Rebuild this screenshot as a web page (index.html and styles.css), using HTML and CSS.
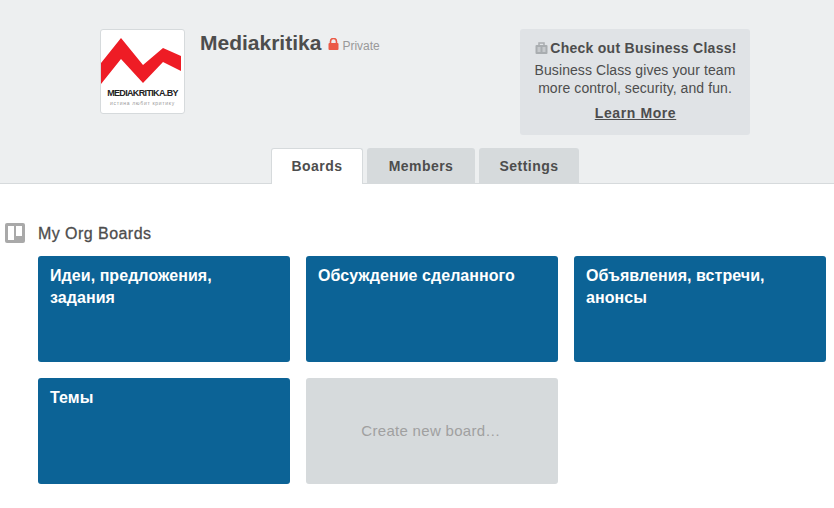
FILE: index.html
```html
<!DOCTYPE html>
<html lang="en">
<head>
<meta charset="utf-8">
<title>Mediakritika</title>
<link rel="stylesheet" href="styles.css">
</head>
<body>
<header class="org-header">
  <div class="org-top">
    <div class="org-logo">
      <svg class="logo-mark" width="83" height="56" viewBox="0 0 83 56">
        <polygon points="0,33 20,8 42,35 62,18 80,26 80,41 62,32 42,53 20,29 0,54" fill="#ee1c25"/>
      </svg>
      <div class="logo-name">MEDIAKRITIKA.BY</div>
      <div class="logo-tag">истина любит критику</div>
    </div>
    <div class="org-title">
      <h1 class="org-name">Mediakritika</h1>
      <svg class="lock" width="11" height="12" viewBox="0 0 11 12"><path d="M2.5 5V3.5a3 3 0 0 1 6 0V5" fill="none" stroke="#eb5a46" stroke-width="1.6"/><rect x="0.5" y="5" width="10" height="7" rx="1" fill="#eb5a46"/></svg>
      <span class="org-private">Private</span>
    </div>
    <aside class="promo">
      <div class="promo-head">
        <svg class="promo-icon" width="13" height="12" viewBox="0 0 13 12"><path d="M4 3V1h5V3" fill="none" stroke="#a9adb0" stroke-width="1.5"/><rect x="0.5" y="3" width="12" height="9" rx="1" fill="#a9adb0"/><rect x="2.5" y="5" width="3" height="5" fill="#c6c9cc"/><rect x="7.500" y="5" width="3" height="5" fill="#c6c9cc"/></svg>
        <span>Check out Business Class!</span>
      </div>
      <p class="promo-text">Business Class gives your team more control, security, and fun.</p>
      <a class="promo-link" href="#">Learn More</a>
    </aside>
  </div>
  <nav class="tabs">
    <a class="tab tab-active" href="#">Boards</a>
    <a class="tab tab-members" href="#">Members</a>
    <a class="tab tab-settings" href="#">Settings</a>
  </nav>
</header>
<main class="content">
  <div class="section-head">
    <svg class="section-icon" width="20" height="20" viewBox="0 0 20 20"><rect width="20" height="20" rx="2" fill="#a9a9a9"/><rect x="3" y="3" width="6" height="14" fill="#fff"/><rect x="11" y="3" width="6" height="10" fill="#fff"/></svg>
    <h2 class="section-title">My Org Boards</h2>
  </div>
  <div class="boards">
    <a class="board" href="#">Идеи, предложения, задания</a>
    <a class="board" href="#">Обсуждение сделанного</a>
    <a class="board" href="#">Объявления, встречи, анонсы</a>
    <a class="board" href="#">Темы</a>
    <a class="board board-new" href="#">Create new board…</a>
  </div>
</main>
</body>
</html>
```
FILE: styles.css
```css
* { box-sizing: border-box; }
html, body { margin: 0; padding: 0; }
body {
  background: #fff;
  color: #4d4d4d;
  font-family: "Liberation Sans", Arial, sans-serif;
  font-size: 14px;
  overflow: hidden;
}
.org-header {
  height: 184px;
  background: #edeff0;
  border-bottom: 1px solid #d6dadc;
}
.org-top {
  display: flex;
  height: 148px;
  padding: 29px 0 0 100px;
}
.org-logo {
  width: 85px;
  height: 85px;
  background: #fff;
  border: 1px solid #d6dadc;
  border-radius: 3px;
  display: flex;
  flex-direction: column;
  align-items: center;
  overflow: hidden;
}
.logo-mark { display: block; flex: none; }
.logo-name {
  margin-top: 2px;
  color: #222;
  font-size: 9px;
  font-weight: 700;
  letter-spacing: -0.65px;
  line-height: 11px;
  white-space: nowrap;
}
.logo-tag {
  margin-top: 1px;
  color: #999;
  font-size: 5px;
  letter-spacing: 0.7px;
  line-height: 6px;
  white-space: nowrap;
}
.org-title {
  width: 320px;
  margin-left: 15px;
  display: flex;
  align-items: baseline;
  height: 28px;
}
.org-name {
  margin: 0;
  font-size: 21px;
  line-height: 28px;
  font-weight: 700;
  color: #4d4d4d;
}
.lock { margin-left: 7px; align-self: center; margin-top: 2px; }
.org-private { margin-left: 3px; font-size: 12px; color: #999; }
.promo {
  width: 230px;
  height: 106px;
  padding: 11px 10px 0;
  background: #e0e3e6;
  border-radius: 3px;
  text-align: center;
}
.promo-head {
  display: flex;
  justify-content: center;
  align-items: center;
  gap: 2px;
  margin: 0 -6px;
  padding-left: 2px;
  font-size: 14px;
  line-height: 16px;
  font-weight: 700;
  letter-spacing: 0.27px;
  white-space: nowrap;
}
.promo-text {
  margin: 5px 0 0;
  font-size: 14px;
  line-height: 18px;
  letter-spacing: 0.08px;
}
.promo-link {
  display: block;
  margin-top: 7px;
  padding-left: 1px;
  font-size: 14px;
  line-height: 18px;
  font-weight: 700;
  letter-spacing: 0.6px;
  color: #4d4d4d;
}
.tabs {
  display: flex;
  gap: 4px;
  height: 36px;
  padding-left: 271px;
}
.tab {
  display: block;
  width: 100px;
  height: 35px;
  background: #d6dadc;
  border-radius: 3px 3px 0 0;
  color: #4d4d4d;
  font-size: 14px;
  line-height: 36px;
  font-weight: 700;
  letter-spacing: 0.45px;
  text-align: center;
  text-decoration: none;
}
.tab-active {
  width: 92px;
  height: 36px;
  background: #fff;
  border: 1px solid #d6dadc;
  border-bottom: 0;
  line-height: 35px;
}
.tab-members { width: 108px; }
.content { padding: 39px 0 0 5px; }
.section-head {
  display: flex;
  align-items: center;
  height: 20px;
}
.section-title {
  margin: 2px 0 0 13px;
  font-size: 16px;
  line-height: 20px;
  font-weight: 400;
  letter-spacing: 0.45px;
  -webkit-text-stroke: 0.3px #4d4d4d;
  color: #4d4d4d;
}
.boards {
  display: grid;
  grid-template-columns: repeat(3, 252px);
  grid-auto-rows: 106px;
  gap: 16px;
  margin: 13px 0 0 33px;
}
.board {
  display: block;
  padding: 9px 12px;
  background: #0c6396;
  border-radius: 3px;
  color: #fff;
  font-size: 16px;
  line-height: 22px;
  font-weight: 700;
  letter-spacing: 0.06px;
  text-decoration: none;
}
.board-new {
  display: flex;
  align-items: center;
  justify-content: center;
  padding: 9px 12px 9px 10px;
  background: #d6dadc;
  color: #a0a0a0;
  font-weight: 400;
  font-size: 15px;
  letter-spacing: 0.3px;
}
```
